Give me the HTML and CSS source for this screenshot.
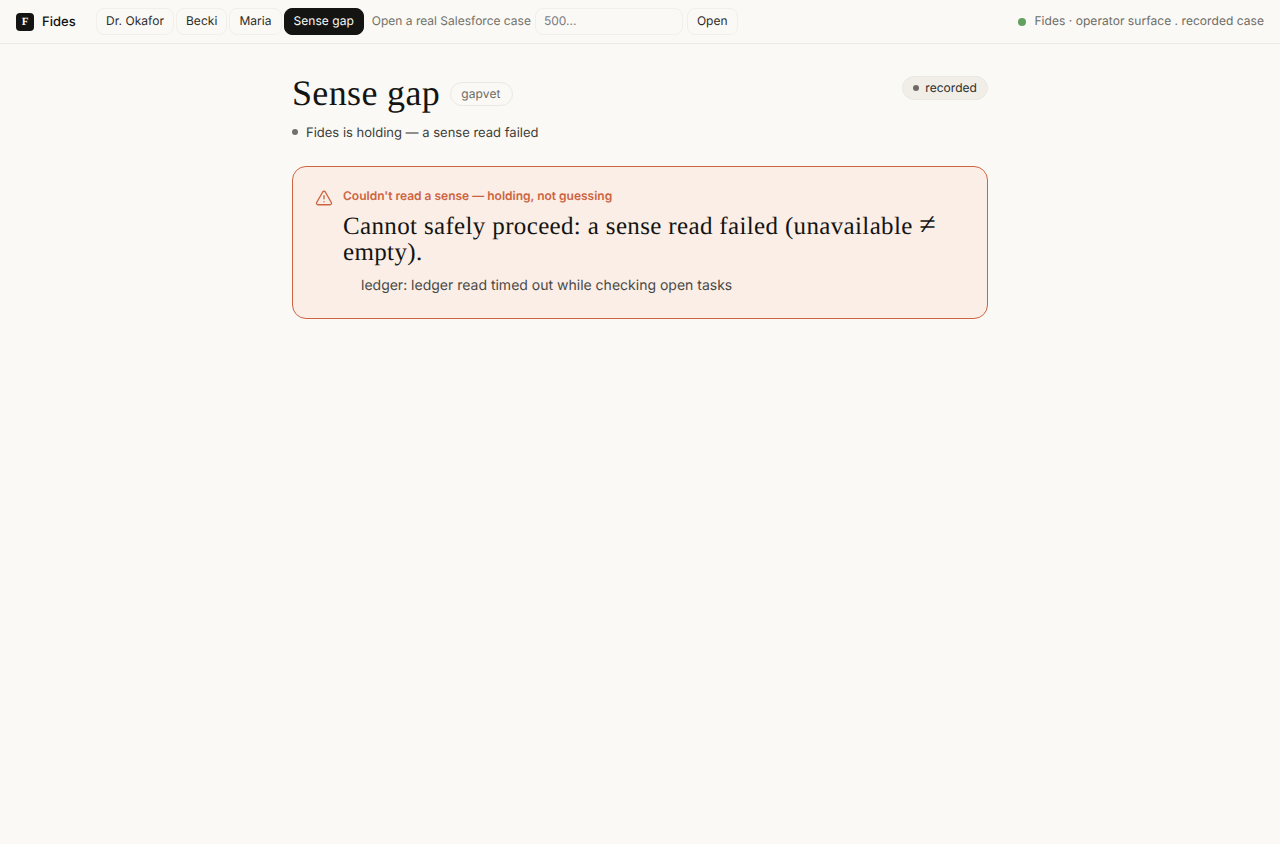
FILE: index.html
```html
<!DOCTYPE html>
<html lang="en">
<head>
<meta charset="utf-8">
<title>Fides</title>
<link rel="stylesheet" href="styles.css">
</head>
<body>
<header class="topbar">
  <div class="brand"><span class="brand-mark">F</span><span class="brand-name">Fides</span></div>
  <nav class="nav">
    <button class="chip">Dr. Okafor</button>
    <button class="chip">Becki</button>
    <button class="chip">Maria</button>
    <button class="chip chip-active">Sense gap</button>
  </nav>
  <form class="case-form">
    <label class="case-label" for="case">Open a real Salesforce case</label>
    <input class="case-input" id="case" placeholder="500...">
    <button class="chip" type="button">Open</button>
  </form>
  <div class="status"><span class="status-dot"></span><span>Fides · operator surface . recorded case</span></div>
</header>
<main class="page">
  <div class="head">
    <div class="head-main">
      <div class="title-row">
        <h1 class="title">Sense gap</h1>
        <span class="tag">gapvet</span>
      </div>
      <p class="sub"><span class="sub-dot"></span>Fides is holding — a sense read failed</p>
    </div>
    <span class="pill"><span class="pill-dot"></span>recorded</span>
  </div>
  <section class="alert">
    <svg class="alert-icon" viewBox="0 0 24 24" fill="none" stroke="currentColor" stroke-width="2" stroke-linecap="round" stroke-linejoin="round"><path d="M21.73 18l-8-14a2 2 0 0 0-3.48 0l-8 14A2 2 0 0 0 4 21h16a2 2 0 0 0 1.73-3z"/><path d="M12 9v4"/><path d="M12 17h.01"/></svg>
    <div class="alert-body">
      <div class="alert-kicker">Couldn't read a sense — holding, not guessing</div>
      <div class="alert-title">Cannot safely proceed: a sense read failed (unavailable <span class="neq">≠</span> empty).</div>
      <div class="alert-detail">ledger: ledger read timed out while checking open tasks</div>
    </div>
  </section>
</main>
</body>
</html>
```
FILE: styles.css
```css
* { box-sizing: border-box; }
html, body { margin: 0; height: 100%; }
body {
  background: #faf9f5;
  color: #141412;
  font-family: Inter, "Liberation Sans", sans-serif;
  font-size: 13px;
  text-rendering: geometricPrecision;
}
.topbar {
  height: 44px;
  display: flex;
  align-items: center;
  padding: 0 16px;
  border-bottom: 1px solid #ebe9e3;
}
.brand { display: flex; align-items: center; gap: 8px; margin-right: 21px; }
.brand-mark {
  width: 18px; height: 18px;
  border-radius: 4px;
  background: #141412;
  color: #faf9f5;
  font-family: "Liberation Serif", serif;
  font-size: 11px;
  font-weight: 700;
  display: flex; align-items: center; justify-content: center;
}
.brand-name { width: 33px; font-size: 13px; font-weight: 450; letter-spacing: 0.05px; }
.nav { display: flex; gap: 2px; margin-right: 8px; }
.chip {
  height: 27px;
  padding: 0 9px 2px;
  border: 1px solid #f1efea;
  border-radius: 8px;
  background: #faf9f5;
  color: #2e2d2a;
  font: 430 12px Inter, sans-serif;
  letter-spacing: 0.04px;
  text-rendering: geometricPrecision;
}
.chip-active { background: #141412; border-color: #141412; color: #faf9f5; }
.case-form { display: flex; align-items: center; gap: 4px; }
.case-label { font-size: 12px; color: #73716b; padding-bottom: 2px; }
.case-input {
  width: 148px; height: 27px;
  padding: 0 8px 2px;
  border: 1px solid #f1efea;
  border-radius: 8px;
  background: #faf9f5;
  font: 12px Inter, sans-serif;
  text-rendering: geometricPrecision;
}
.case-input::placeholder { color: #7a7b85; opacity: 1; }
.status { margin-left: auto; display: flex; align-items: center; gap: 8px; padding-bottom: 2px; font-size: 12px; letter-spacing: 0.05px; color: #6d6b65; }
.status-dot { width: 8px; height: 8px; border-radius: 50%; background: #63a05d; margin-top: 2px; }
.page { width: 696px; margin: 0 auto; padding-top: 32px; }
.head { display: flex; justify-content: space-between; align-items: flex-start; }
.title-row { display: flex; align-items: center; gap: 10px; }
.title {
  margin: 0;
  font-family: "Liberation Serif", serif;
  font-size: 36px;
  font-weight: 400;
  line-height: 34px;
  letter-spacing: 0.35px;
}
.tag {
  height: 24px;
  margin-top: 2px;
  padding: 0 11px 0 10px;
  border: 1px solid #ebe9e3;
  border-radius: 12px;
  font-size: 12px;
  line-height: 22px;
  letter-spacing: 0.15px;
  color: #6d6b65;
}
.sub { margin: 13px 0 0; display: flex; align-items: center; gap: 8px; font-size: 13px; line-height: 20px; color: #3e3d39; }
.sub-dot { width: 6px; height: 6px; margin-top: -2px; border-radius: 50%; background: #73716b; }
.pill {
  display: flex; align-items: center; gap: 6px;
  height: 24px;
  padding: 0 10px 1px;
  border: 1px solid #ebe9e3;
  border-radius: 12px;
  background: #f0eee7;
  font-size: 12px;
  font-weight: 430;
  letter-spacing: 0.04px;
  color: #2e2d2a;
}
.pill-dot { width: 6px; height: 6px; border-radius: 50%; background: #6d6b65; }
.alert {
  margin-top: 23px;
  height: 153px;
  display: flex;
  gap: 10px;
  padding: 21px 22px;
  border: 1px solid #cd6440;
  border-radius: 14px;
  background: #faeee7;
}
.alert-icon { width: 18px; height: 18px; flex: none; margin-top: 1px; color: #cd6440; stroke-width: 1.8; }
.alert-body { min-width: 0; }
.alert-kicker { font-size: 12px; line-height: 16px; font-weight: 600; color: #cd6440; }
.alert-title {
  margin-top: 10px;
  font-family: "Liberation Serif", serif;
  font-size: 25px;
  line-height: 26px;
  letter-spacing: 0.35px;
}
.neq { font-size: 30px; line-height: 20px; font-weight: 400; }
.alert-detail { margin-top: 10px; padding-left: 18px; font-size: 14px; line-height: 20px; color: #4a4945; }
```
